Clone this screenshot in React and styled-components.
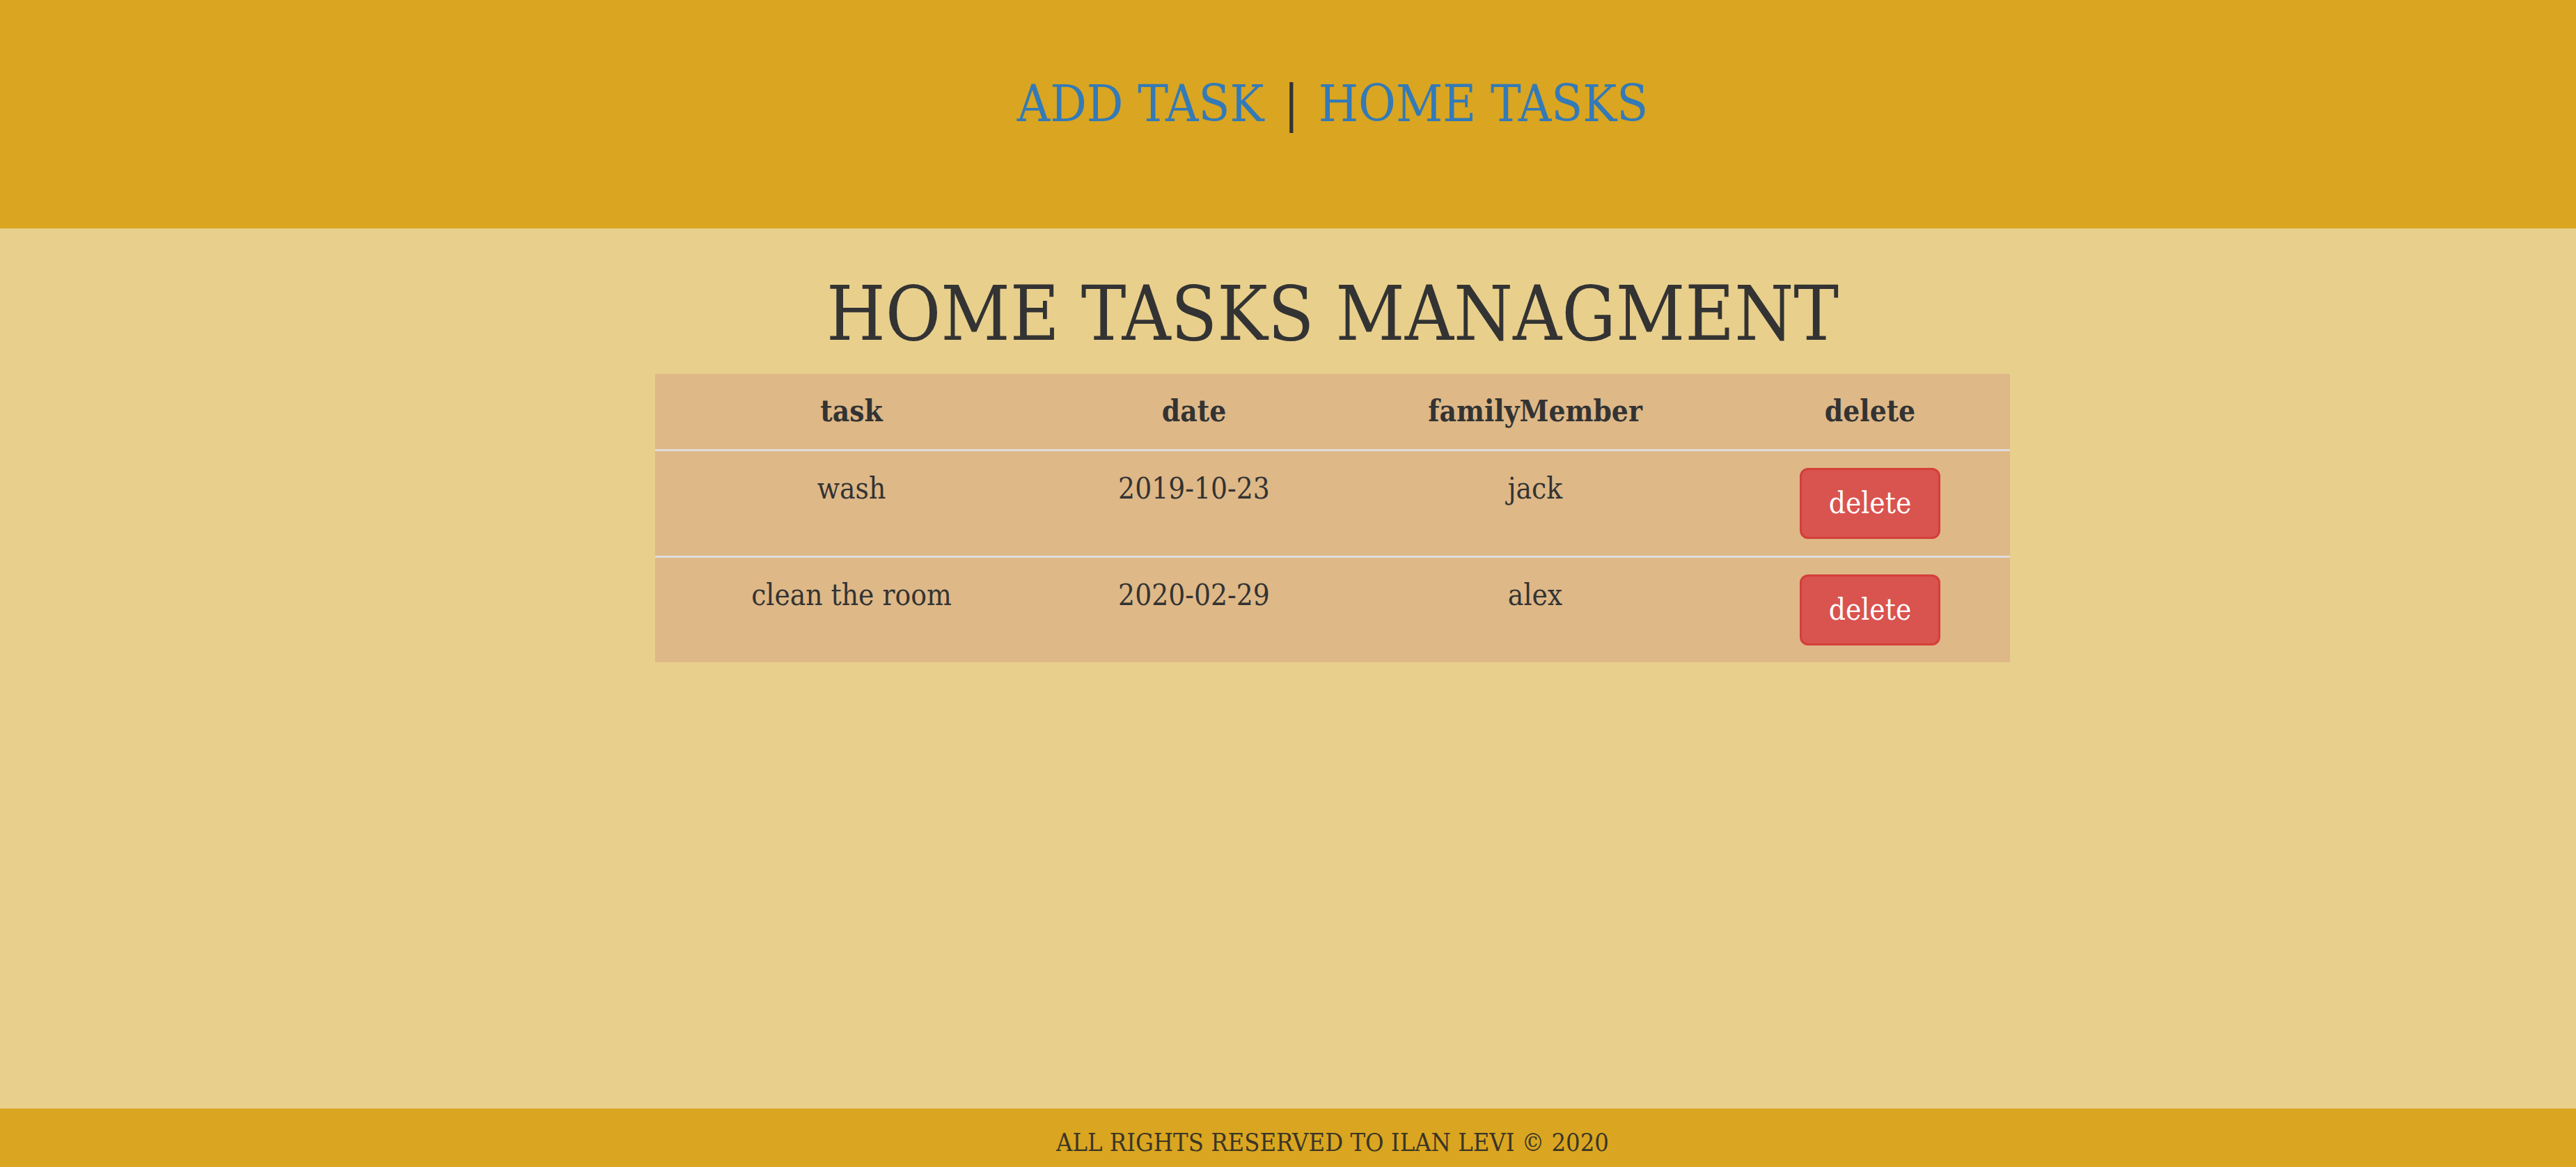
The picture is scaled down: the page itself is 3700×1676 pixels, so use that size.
import styled, { createGlobalStyle } from "styled-components"

const GlobalStyle = createGlobalStyle`
    html, body {
        margin: 0;
        padding: 0;
    }
    body {
        background-color: #E8CF8C;
        font-family: "DejaVu Serif Condensed", "DejaVu Serif", serif;
        font-stretch: condensed;
        color: #333333;
    }
`

const Page = styled.div`
    display: flex;
    flex-direction: column;
    min-height: 100vh;
`

const Header = styled.header`
    height: 328px;
    box-sizing: border-box;
    padding-top: 112px;
    padding-left: 128px;
    background-color: #DAA520;
    text-align: center;
`

const Nav = styled.nav`
    font-size: 73px;
    line-height: 1;
`

const NavLink = styled.a`
    color: #337AB7;
    text-decoration: none;
    cursor: pointer;
`

const Separator = styled.span`
    margin: 0 28px;
    color: #333333;
`

const Main = styled.main`
    flex: 1;
    padding-left: 128px;
    padding-bottom: 40px;
`

const Title = styled.h1`
    margin: 69px 0 32px;
    font-size: 108px;
    font-weight: normal;
    line-height: 1;
    text-align: center;
`

const Table = styled.table`
    width: 1946px;
    margin: 0 auto;
    table-layout: fixed;
    border-collapse: collapse;
    background-color: #DEB887;
    font-size: 42px;
    line-height: 60px;
    text-align: center;
`

const HeadCell = styled.th`
    width: ${p => p.$width}px;
    box-sizing: border-box;
    padding: 24px;
    font-weight: bold;
    border-bottom: 3px solid #DDDDDD;
`

const Cell = styled.td`
    padding: 24px;
    vertical-align: top;
    font-weight: normal;
`

const Row = styled.tr`
    & + & > td {
        border-top: 3px solid #DDDDDD;
    }
`

const DeleteButton = styled.button`
    width: 202px;
    height: 102px;
    padding: 0;
    box-sizing: border-box;
    border: 3px solid #D43F3A;
    border-radius: 12px;
    background-color: #D9534F;
    color: #FFFFFF;
    font-family: inherit;
    font-stretch: condensed;
    font-size: 42px;
    line-height: 60px;
    cursor: pointer;
`

const Footer = styled.footer`
    height: 84px;
    box-sizing: border-box;
    padding-top: 31px;
    padding-left: 128px;
    background-color: #DAA520;
    font-size: 36px;
    line-height: 1;
    text-align: center;
    color: #3a3526;
`

const columns = [
    { name: "task", width: 564 },
    { name: "date", width: 420 },
    { name: "familyMember", width: 560 },
    { name: "delete", width: 402 },
]

const tasks = [
    { task: "wash", date: "2019-10-23", familyMember: "jack" },
    { task: "clean the room", date: "2020-02-29", familyMember: "alex" },
]

export default function App() {
    return (
        <Page>
            <GlobalStyle />
            <Header>
                <Nav>
                    <NavLink>ADD TASK</NavLink>
                    <Separator>|</Separator>
                    <NavLink>HOME TASKS</NavLink>
                </Nav>
            </Header>
            <Main>
                <Title>HOME TASKS MANAGMENT</Title>
                <Table>
                    <thead>
                        <tr>
                            {columns.map(c => (
                                <HeadCell key={c.name} $width={c.width}>{c.name}</HeadCell>
                            ))}
                        </tr>
                    </thead>
                    <tbody>
                        {tasks.map((t, i) => (
                            <Row key={i}>
                                <Cell>{t.task}</Cell>
                                <Cell>{t.date}</Cell>
                                <Cell>{t.familyMember}</Cell>
                                <Cell>
                                    <DeleteButton>delete</DeleteButton>
                                </Cell>
                            </Row>
                        ))}
                    </tbody>
                </Table>
            </Main>
            <Footer>ALL RIGHTS RESERVED TO ILAN LEVI © 2020</Footer>
        </Page>
    )
}
